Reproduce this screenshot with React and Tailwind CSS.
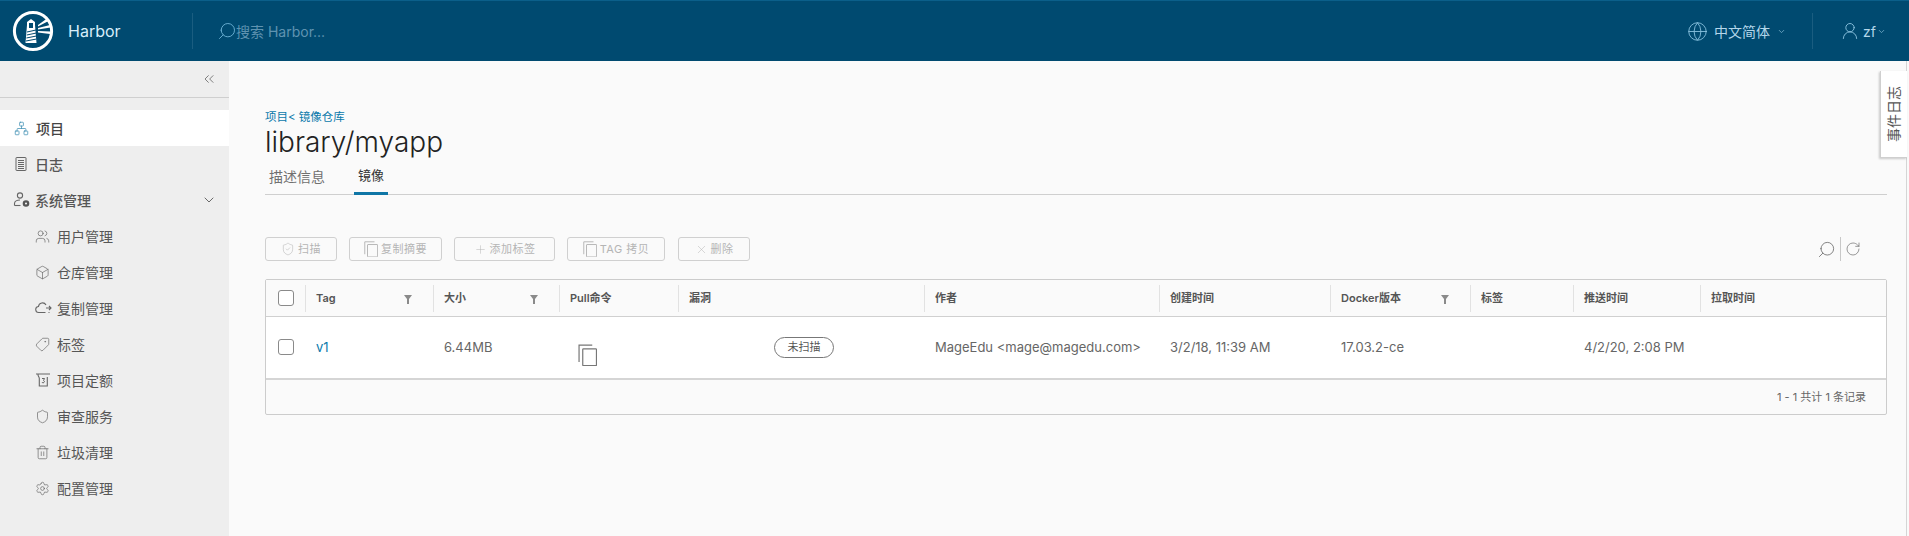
import React from "react";
import { Network, ChevronDown, ChevronsLeft, Users, Box, Tag, Shield, Trash2, Settings, Search, RotateCw, Globe, UserRound, X, Plus, ShieldCheck, Copy, Filter } from "lucide-react";

const FONT = "font-['Inter','Noto_Sans_CJK_SC',sans-serif]";

function Logo() {
  return (
    <svg width="42" height="42" viewBox="0 0 42 42" className="shrink-0">
      <circle cx="21" cy="21" r="18.6" fill="none" stroke="#fff" strokeWidth="3" />
      <path d="M15 12 L19 9 L23 12 L23 15 L24.5 33 L13.5 33 L15 15 Z" fill="#fff" />
      <path d="M17 13h4v5h-4z" fill="#004a70" />
      <path d="M15 22l9-2M14.8 25l9.6-2M14.4 28l10-2M14 31l10.5-2" stroke="#004a70" strokeWidth="1" />
      <path d="M26 15 L35 8.5 L36.5 11 L26 16.5 Z M26 18 L38 15 L38.6 17.5 L26 19.5 Z M26 21 L38.5 21.5 L38 24 L26 22.5 Z" fill="#fff" />
    </svg>
  );
}

function LogIcon() {
  return (
    <svg width="16" height="16" viewBox="0 0 16 16" fill="none" stroke="#666" strokeWidth="1">
      <rect x="3" y="1.5" width="10" height="13" rx="0.5" />
      <path d="M5 4.5h6M5 6.5h6M5 8.5h6M5 10.5h6M5 12.5h6" />
    </svg>
  );
}

function AdminIcon() {
  return (
    <svg width="18" height="18" viewBox="0 0 18 18" fill="none" stroke="#666" strokeWidth="1.1">
      <circle cx="7" cy="4.5" r="2.6" />
      <path d="M1.5 14.5v-2c0-2 2.5-3.5 5.5-3.5" />
      <path d="M1.5 14.5h6" />
      <circle cx="13" cy="12.5" r="2.2" strokeWidth="2.2" stroke="#555" />
    </svg>
  );
}

function CloudIcon() {
  return (
    <svg width="17" height="16" viewBox="0 0 17 16" fill="none" stroke="#666" strokeWidth="1.1">
      <path d="M10.5 12.5H4a3 3 0 0 1-.5-6A4 4 0 0 1 11 5" />
      <path d="M11 8h5M14 6l2 2-2 2" />
      <path d="M13.5 12.5h1" />
    </svg>
  );
}

function QuotaIcon() {
  return (
    <svg width="16" height="16" viewBox="0 0 16 16" fill="none" stroke="#666" strokeWidth="1.1">
      <path d="M1 2h14M3 2.5c0 2 1.3 2.5 1.3 4V14h8V5M13 2.5" />
      <path d="M7 6.5h2.5l-1 2a1.2 1.2 0 1 1-1.5 1.6" strokeWidth="1" />
    </svg>
  );
}

const NAV = [
  { label: "用户管理", icon: <Users size={15} strokeWidth={1.1} color="#666" /> },
  { label: "仓库管理", icon: <Box size={15} strokeWidth={1.1} color="#666" /> },
  { label: "复制管理", icon: <CloudIcon /> },
  { label: "标签", icon: <Tag size={15} strokeWidth={1.1} color="#666" className="-scale-x-100" /> },
  { label: "项目定额", icon: <QuotaIcon /> },
  { label: "审查服务", icon: <Shield size={15} strokeWidth={1.1} color="#666" /> },
  { label: "垃圾清理", icon: <Trash2 size={15} strokeWidth={1.1} color="#666" /> },
  { label: "配置管理", icon: <Settings size={15} strokeWidth={1.1} color="#666" /> },
];

function ToolButton({ icon, children, className }) {
  return (
    <button className={`h-[24px] flex items-center justify-center gap-[3px] border border-[#d0d0d0] rounded-[3px] text-[11px] tracking-[0.5px] text-[#b5b5b5] ${className}`}>
      {icon}
      <span>{children}</span>
    </button>
  );
}

function CopyIcon({ size = 14, color = "#b8b8b8", sw = 1 }) {
  return (
    <svg width={size} height={size * 1.17} viewBox="0 0 18 21" fill="none" stroke={color} strokeWidth={sw * 18 / size}>
      <rect x="4.5" y="4.5" width="13" height="16" rx="0.6" />
      <path d="M1 17V1h12.5" />
    </svg>
  );
}

function Funnel() {
  return (
    <svg width="8" height="9" viewBox="0 0 8 9" className="absolute right-[21px] top-[15px]">
      <path d="M0 0h8L5 4v5H3V4z" fill="#8a8a8a" />
    </svg>
  );
}

const HEAD = [
  { label: "Tag", filter: true },
  { label: "大小", filter: true },
  { label: "Pull命令" },
  { label: "漏洞" },
  { label: "作者" },
  { label: "创建时间" },
  { label: "Docker版本", filter: true },
  { label: "标签" },
  { label: "推送时间" },
  { label: "拉取时间" },
];

const COLS = "grid grid-cols-[39px_128px_126px_119px_246px_235px_171px_140px_103px_127px_1fr]";

function Checkbox() {
  return <div className="w-[16px] h-[16px] border border-[#8a8a8a] rounded-[3px] bg-white" />;
}

export default function App() {
  return (
    <div className={`w-[1909px] h-[536px] overflow-hidden flex flex-col bg-[#fafafa] ${FONT}`}>
      <header className="h-[61px] shrink-0 bg-[#004a70] border-t border-[#0b5f8a] flex items-center">
        <div className="w-[193px] h-[36px] flex items-center pl-[12px] gap-[14px] border-r border-[#1a5d80]">
          <Logo />
          <span className="text-[16px] text-[#d8eefa]">Harbor</span>
        </div>
        <div className="flex items-center pl-[24px] flex-1">
          <Search size={20} strokeWidth={1.1} color="#6fb3d6" className="-scale-x-100 -mr-[1px]" />
          <span className="text-[14px] text-[#5f93b0]">搜索 Harbor...</span>
        </div>
        <div className="flex items-center text-[#b4d7ea] text-[14px] pr-[26px] h-[36px]">
          <Globe size={21} strokeWidth={1} color="#8cc4e0" />
          <span className="ml-[6px] tracking-[0px]">中文简体</span>
          <ChevronDown size={9} strokeWidth={2} color="#7fb5d0" className="ml-[7px]" />
        </div>
        <div className="w-[97px] h-[36px] flex items-center border-l border-[#1a5d80] pl-[27px] text-[#b4d7ea] text-[14px]">
          <UserRound size={20} strokeWidth={1.1} color="#8cc4e0" />
          <span className="ml-[3px]">zf</span>
          <ChevronDown size={9} strokeWidth={2} color="#7fb5d0" className="ml-[1px]" />
        </div>
      </header>

      <div className="flex-1 flex min-h-0">
        <aside className="w-[229px] shrink-0 bg-[#eeeeee] text-[14px] text-[#565656]">
          <div className="h-[37px] border-b border-[#cfcfcf] flex items-center justify-end pr-[12px]">
            <ChevronsLeft size={16} strokeWidth={1.1} color="#555" />
          </div>
          <div className="h-[12px]" />
          <div className="h-[36px] bg-white flex items-center pl-[14px] gap-[7px] font-medium text-[#444]">
            <Network size={15} strokeWidth={1.2} color="#3f8fb3" />
            <span>项目</span>
          </div>
          <div className="h-[36px] flex items-center pl-[13px] gap-[6px] font-medium">
            <LogIcon />
            <span>日志</span>
          </div>
          <div className="h-[36px] flex items-center pl-[13px] gap-[4px] pr-[12px] font-medium">
            <AdminIcon />
            <span className="flex-1">系统管理</span>
            <ChevronDown size={16} strokeWidth={1.3} color="#555" />
          </div>
          {NAV.map((n) => (
            <div key={n.label} className="h-[36px] flex items-center pl-[35px]">
              <span className="w-[22px] flex items-center">{n.icon}</span>
              <span>{n.label}</span>
            </div>
          ))}
        </aside>

        <main className="flex-1 min-w-0 border-r border-[#d5d5d5] mr-[2px] relative pl-[36px] pr-[19px] pt-[48px]">
          <div className="text-[11.5px] leading-[16px] text-[#0a79ab]">项目&lt; 镜像仓库</div>
          <h1 className="text-[28px] leading-[34px] font-light text-[#222]">library/myapp</h1>
          <div className="h-[36px] border-b border-[#cfcfcf] flex items-end text-[14px]">
            <div className="ml-[4px] w-[85px] h-[35px] flex items-center text-[#707070]">描述信息</div>
            <div className="h-[35px] w-[34px] flex items-center justify-center border-b-[3px] border-[#0f76a6] -mb-[1px] text-[#333] text-[13px]">镜像</div>
          </div>

          <div className="mt-[42px] flex items-center h-[24px]">
            <ToolButton className="w-[72px]" icon={<ShieldCheck size={14} strokeWidth={1} color="#b8b8b8" />}>扫描</ToolButton>
            <ToolButton className="w-[93px] ml-[12px]" icon={<CopyIcon />}>复制摘要</ToolButton>
            <ToolButton className="w-[101px] ml-[12px]" icon={<Plus size={13} strokeWidth={1} color="#b8b8b8" />}>添加标签</ToolButton>
            <ToolButton className="w-[98px] ml-[12px]" icon={<CopyIcon />}>TAG 拷贝</ToolButton>
            <ToolButton className="w-[72px] ml-[13px]" icon={<X size={13} strokeWidth={1} color="#b8b8b8" />}>删除</ToolButton>
            <div className="ml-auto flex items-center mr-[26px]">
              <Search size={19} strokeWidth={1} color="#666" className="-scale-x-100" />
              <span className="w-px h-[24px] bg-[#c8c8c8] mx-[4px]" />
              <RotateCw size={16} strokeWidth={1} color="#666" />
            </div>
          </div>

          <div className="mt-[18px] h-[136px] border border-[#cccccc] rounded-[2px] flex flex-col">
            <div className={`${COLS} h-[37px] border-b border-[#d0d0d0] bg-[#fafafa] text-[11px] font-semibold text-[#555]`}>
              <div className="flex items-center justify-center pb-[1px] pl-[1px]"><Checkbox /></div>
              {HEAD.map((h) => (
                <div key={h.label} className="relative flex items-center pl-[11px]">
                  <span className="absolute left-0 top-[5px] bottom-[4px] w-px bg-[#e2e2e2]" />
                  <span>{h.label}</span>
                  {h.filter && <Funnel />}
                </div>
              ))}
            </div>
            <div className={`${COLS} h-[63px] bg-white border-b-2 border-[#d5d5d5] text-[13px] text-[#666]`}>
              <div className="flex items-center justify-center pb-[1px] pl-[1px]"><Checkbox /></div>
              <div className="flex items-center pl-[11px] text-[#0a79ab]">v1</div>
              <div className="flex items-center pl-[11px]">6.44MB</div>
              <div className="relative pl-[19px] pt-[27px]"><CopyIcon size={19} color="#777" sw={1.2} /></div>
              <div className="flex items-center justify-center pl-[6px]">
                <span className="h-[21px] w-[60px] border border-[#777] rounded-full flex items-center justify-center text-[11px] text-[#555]">未扫描</span>
              </div>
              <div className="flex items-center pl-[11px]">MageEdu &lt;mage@magedu.com&gt;</div>
              <div className="flex items-center pl-[11px]">3/2/18, 11:39 AM</div>
              <div className="flex items-center pl-[11px]">17.03.2-ce</div>
              <div />
              <div className="flex items-center pl-[11px]">4/2/20, 2:08 PM</div>
              <div />
            </div>
            <div className="flex-1 flex items-center justify-end pr-[20px] text-[11px] text-[#666]">1 - 1 共计 1 条记录</div>
          </div>

          <div className="absolute right-[-1px] top-[10px] w-[27px] h-[87px] bg-white border-l border-b border-[#cfcfcf] shadow-[-1px_1px_2px_rgba(0,0,0,0.2)] flex items-center justify-center">
            <span className="[writing-mode:vertical-rl] [text-orientation:sideways] rotate-180 text-[14px] text-[#555] leading-none">事件日志</span>
          </div>
        </main>
      </div>
    </div>
  );
}
